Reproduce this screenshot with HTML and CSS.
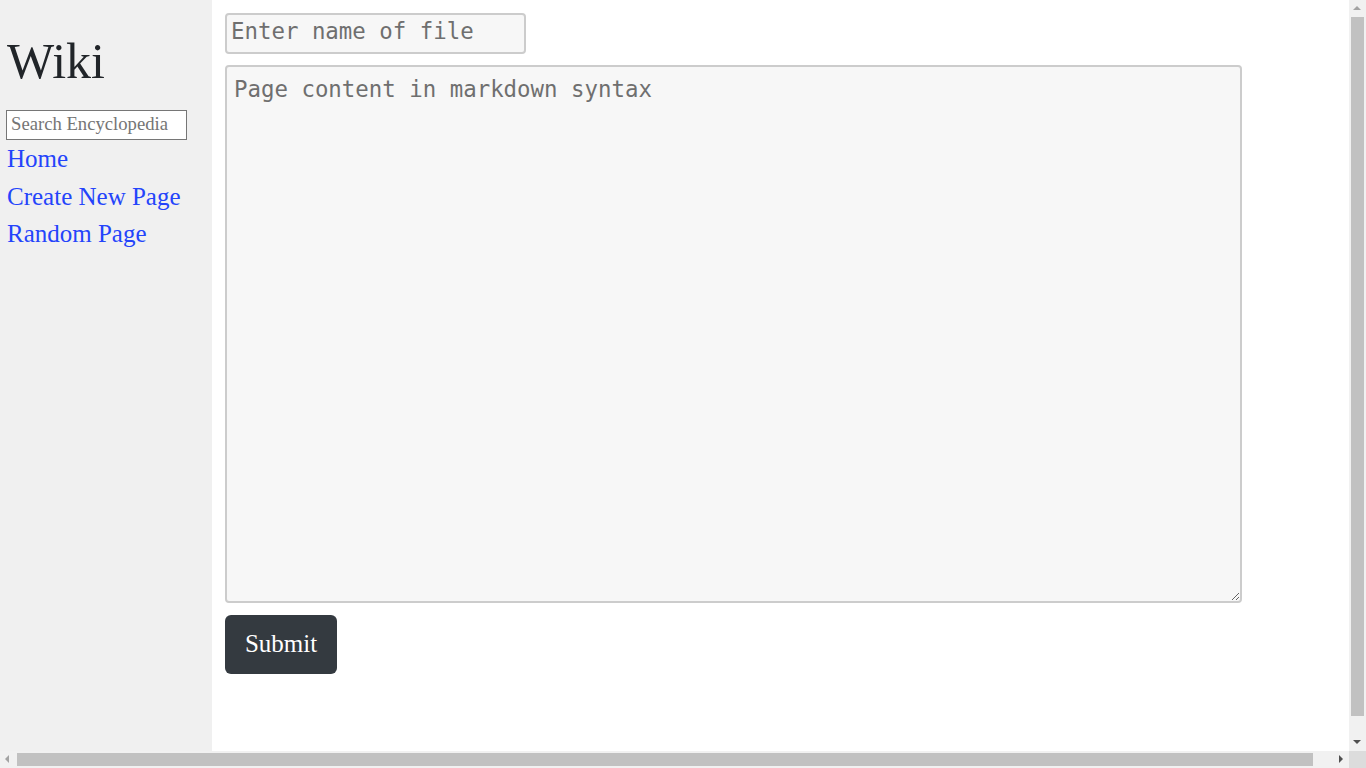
FILE: index.html
```html
<!DOCTYPE html>
<html lang="en">
<head>
<meta charset="utf-8">
<title>Create New Page</title>
<link rel="stylesheet" href="styles.css">
</head>
<body>
<div class="page">
  <aside class="sidebar">
    <h2 class="brand">Wiki</h2>
    <form class="search-form">
      <input class="search" type="text" name="q" placeholder="Search Encyclopedia">
    </form>
    <div class="nav-item"><a href="#">Home</a></div>
    <div class="nav-item"><a href="#">Create New Page</a></div>
    <div class="nav-item"><a href="#">Random Page</a></div>
  </aside>
  <main class="main">
    <form class="editor">
      <input class="title-input" type="text" placeholder="Enter name of file">
      <textarea class="content-input" placeholder="Page content in markdown syntax"></textarea>
      <div><button class="submit" type="submit">Submit</button></div>
    </form>
  </main>
</div>

<div class="vscroll" aria-hidden="true">
  <span class="arrow arrow-up"></span>
  <span class="vthumb"></span>
  <span class="arrow arrow-down"></span>
</div>
<div class="hscroll" aria-hidden="true">
  <span class="arrow arrow-left"></span>
  <span class="hthumb"></span>
  <span class="arrow arrow-right"></span>
</div>
<div class="scroll-corner" aria-hidden="true"></div>
</body>
</html>
```

FILE: styles.css
```css
html, body {
  margin: 0;
  padding: 0;
  overflow: hidden;
}

body {
  font-family: "Liberation Serif", "Times New Roman", serif;
  color: #212529;
  background: #ffffff;
}

.page {
  display: flex;
  min-height: 100vh;
}

.sidebar {
  width: 212px;
  flex: 0 0 212px;
  box-sizing: border-box;
  background: #f0f0f0;
  padding-left: 6px;
}

.brand {
  font-size: 50px;
  font-weight: 400;
  line-height: 1.2;
  margin: 31px 0 19px 1px;
}

.search-form {
  margin: 0;
}

.search {
  box-sizing: border-box;
  width: 181px;
  height: 30px;
  margin: 0;
  padding: 0 4px 2px 4px;
  border: 1px solid #767676;
  border-radius: 0;
  background: #ffffff;
  font-family: "Liberation Serif", "Times New Roman", serif;
  font-size: 18.67px;
  color: #212529;
}

.search::placeholder {
  color: #757575;
}

.nav-item {
  font-size: 25px;
  line-height: 1.5;
  padding-left: 1px;
}

.nav-item a {
  color: #2444fb;
  text-decoration: none;
}

.main {
  flex: 1;
  padding: 13px 13px;
}

.editor {
  display: flex;
  flex-direction: column;
  align-items: flex-start;
  margin: 0;
}

.title-input,
.content-input {
  box-sizing: border-box;
  border: 2px solid #cccccc;
  border-radius: 4px;
  background: #f7f7f7;
  font-family: "DejaVu Sans Mono", monospace;
  font-size: 22.4px;
  color: #212529;
  margin: 0;
}

.title-input::placeholder,
.content-input::placeholder {
  color: #6f6f6f;
}

.title-input {
  width: 301px;
  height: 41px;
  padding: 0 4px 6px 4px;
}

.content-input {
  width: 1017px;
  height: 538px;
  margin-top: 11px;
  padding: 9px 7px 7px 7px;
  line-height: 1.2;
}

.submit {
  margin-top: 12px;
  width: 112px;
  height: 59px;
  border: none;
  border-radius: 6px;
  background: #343a40;
  color: #ffffff;
  font-family: "Liberation Serif", "Times New Roman", serif;
  font-size: 25px;
  padding: 0 0 2px 0;
}

/* Classic browser scrollbars drawn over the page */
.vscroll {
  position: fixed;
  top: 0;
  right: 0;
  width: 17px;
  height: 751px;
  background: #f1f1f1;
}

.vthumb {
  position: absolute;
  left: 2px;
  top: 17px;
  width: 13px;
  height: 699px;
  background: #c1c1c1;
}

.hscroll {
  position: fixed;
  left: 0;
  bottom: 0;
  width: 1349px;
  height: 17px;
  background: #f1f1f1;
}

.hthumb {
  position: absolute;
  top: 2px;
  left: 17px;
  width: 1296px;
  height: 13px;
  background: #c1c1c1;
}

.scroll-corner {
  position: fixed;
  right: 0;
  bottom: 0;
  width: 17px;
  height: 17px;
  background: #dcdcdc;
}

.arrow {
  position: absolute;
  width: 0;
  height: 0;
  border-style: solid;
}

.arrow-up {
  left: 4px;
  top: 6px;
  border-width: 0 4.5px 4.5px 4.5px;
  border-color: transparent transparent #a3a3a3 transparent;
}

.arrow-down {
  left: 4px;
  bottom: 7px;
  border-width: 4.5px 4.5px 0 4.5px;
  border-color: #505050 transparent transparent transparent;
}

.arrow-left {
  left: 5px;
  top: 4px;
  border-width: 4.5px 4.5px 4.5px 0;
  border-color: transparent #a3a3a3 transparent transparent;
}

.arrow-right {
  right: 6px;
  top: 4px;
  border-width: 4.5px 0 4.5px 4.5px;
  border-color: transparent transparent transparent #505050;
}
```
